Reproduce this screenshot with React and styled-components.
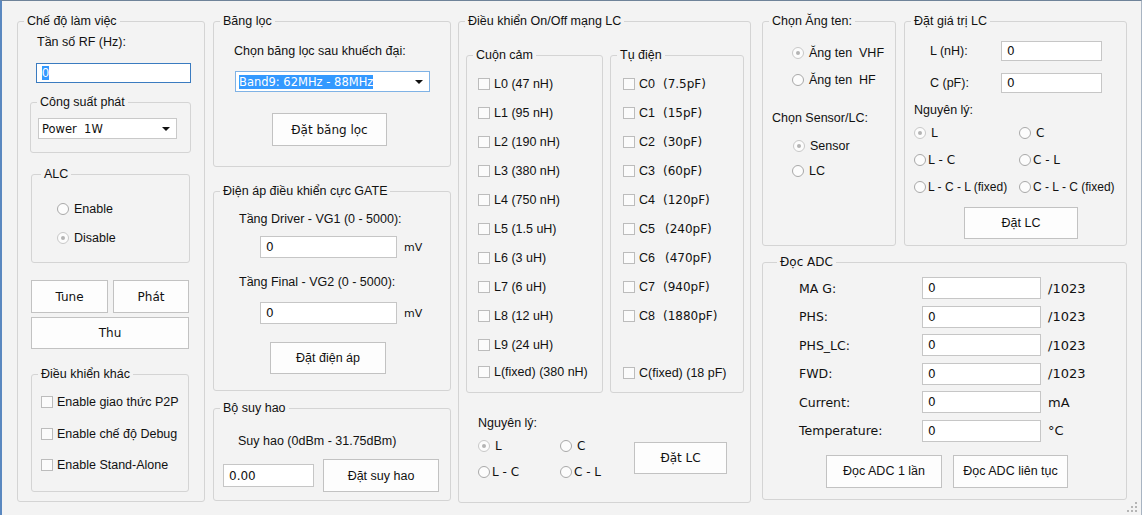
import React from 'react';
import styled, { createGlobalStyle } from 'styled-components';

const SANS = `"Liberation Sans", Arial, sans-serif`;
const ALT = `"DejaVu Sans", Verdana, sans-serif`;

const Global = createGlobalStyle`
  html, body { margin: 0; padding: 0; background: #f3f3f3; }
  body { font-family: ${SANS}; font-size: 12.5px; color: #111; }
  * { box-sizing: border-box; }
`;

const Window = styled.div`
  position: relative;
  width: 1142px;
  height: 515px;
  background: #f3f3f3;
  border-left: 2px solid #5a88c0;
  border-top: 1px solid #6f8399;
  border-right: 1px solid #a8b4c2;
  display: flex;
  align-items: flex-start;
  padding: 13px 0 0 15px;
  overflow: hidden;
`;

const Column = styled.div`
  flex: none;
  width: ${p => p.$w}px;
  margin-left: ${p => p.$ml || 0}px;
  display: flex;
  flex-direction: column;
`;

const Group = styled.fieldset`
  flex: none;
  margin: ${p => `${p.$mt || 0}px 0 0 ${p.$ml || 0}px`};
  padding: 0;
  min-width: 0;
  width: ${p => p.$w}px;
  height: ${p => p.$h}px;
  border: 1px solid #d4d4d4;
  border-radius: 3px;
  display: flex;
  flex-direction: column;
  align-items: flex-start;
`;

const Legend = styled.legend`
  margin-left: ${p => (p.$lx != null ? p.$lx : 6)}px;
  padding: 0 3px;
  font-family: ${p => (p.$alt ? ALT : SANS)};
  font-size: ${p => (p.$alt ? 12 : 12.5)}px;
  line-height: 14px;
  white-space: nowrap;
`;

const Text = styled.span`
  display: block;
  flex: none;
  margin: ${p => `${p.$mt || 0}px 0 0 ${p.$ml || 0}px`};
  width: ${p => (p.$w ? `${p.$w}px` : 'auto')};
  font-family: ${p => (p.$alt ? ALT : SANS)};
  font-size: ${p => p.$fs || 12.5}px;
  line-height: 15px;
  white-space: nowrap;
`;

const Field = styled.div`
  flex: none;
  display: flex;
  align-items: center;
  margin: ${p => `${p.$mt || 0}px 0 0 ${p.$ml || 0}px`};
  width: ${p => p.$w}px;
  height: ${p => p.$h}px;
  padding: 0 5px;
  background: #fff;
  border: 1px solid ${p => (p.$focus ? '#3a7bc0' : '#c6c6c6')};
  font-family: ${p => (p.$alt ? ALT : SANS)};
  font-size: ${p => (p.$alt ? 12 : 12.5)}px;
  white-space: nowrap;
`;

const Selected = styled.span`
  background: #3399ff;
  color: #fff;
  line-height: 14px;
`;

const Combo = styled.div`
  flex: none;
  position: relative;
  display: flex;
  align-items: center;
  margin: ${p => `${p.$mt || 0}px 0 0 ${p.$ml || 0}px`};
  width: ${p => p.$w}px;
  height: ${p => p.$h}px;
  padding: 0 3px;
  background: #fff;
  border: 1px solid ${p => (p.$focus ? '#7fb2e5' : '#c9c9c9')};
  font-family: ${ALT};
  font-size: 11.5px;
  white-space: nowrap;
`;

const ComboArrow = styled.span`
  position: absolute;
  right: 6px;
  top: 50%;
  margin-top: -2px;
  width: 0;
  height: 0;
  border-left: 4px solid transparent;
  border-right: 4px solid transparent;
  border-top: 4px solid #111;
`;

const Button = styled.button`
  flex: none;
  margin: ${p => `${p.$mt || 0}px 0 0 ${p.$ml || 0}px`};
  width: ${p => p.$w}px;
  height: ${p => p.$h}px;
  padding: 0;
  background: #fdfdfd;
  border: 1px solid #c2c2c2;
  border-radius: 0;
  color: #111;
  font-family: ${p => (p.$alt ? ALT : SANS)};
  font-size: ${p => (p.$alt ? 12 : 12.5)}px;
  white-space: nowrap;
`;

const Row = styled.div`
  flex: none;
  display: flex;
  align-items: ${p => p.$align || 'center'};
  gap: ${p => p.$gap || 0}px;
  margin: ${p => `${p.$mt || 0}px 0 0 ${p.$ml || 0}px`};
`;

const Option = styled.div`
  flex: none;
  display: flex;
  align-items: center;
  gap: ${p => (p.$gap != null ? p.$gap : 5)}px;
  height: 15px;
  margin: ${p => `${p.$mt || 0}px 0 0 ${p.$ml || 0}px`};
  font-family: ${p => (p.$alt ? ALT : SANS)};
  font-size: ${p => p.$fs || (p.$alt ? 12 : 12.5)}px;
  white-space: nowrap;
`;

const RadioDot = styled.span`
  flex: none;
  position: relative;
  width: 12px;
  height: 12px;
  border-radius: 50%;
  border: 1px solid ${p => (p.$checked ? '#c8c8c8' : '#a8a8a8')};
  background: #fcfcfc;
  &::after {
    content: '';
    display: ${p => (p.$checked ? 'block' : 'none')};
    position: absolute;
    left: 3px;
    top: 3px;
    width: 4px;
    height: 4px;
    border-radius: 50%;
    background: #b4b4b4;
  }
`;

const CheckBox = styled.span`
  flex: none;
  width: 12px;
  height: 12px;
  border: 1px solid #bcbcbc;
  background: #fbfbfb;
`;

const Value = styled.span`
  margin-left: ${p => p.$ml}px;
  font-family: ${ALT};
  font-size: 12px;
`;

const RadioGrid = styled.div`
  flex: none;
  display: grid;
  grid-template-columns: ${p => p.$cols};
  grid-auto-rows: 15px;
  row-gap: ${p => p.$rowGap}px;
  margin: ${p => `${p.$mt || 0}px 0 0 ${p.$ml || 0}px`};
`;

const AdcGrid = styled.div`
  flex: none;
  display: grid;
  grid-template-columns: 123px 119px auto;
  grid-auto-rows: 22px;
  row-gap: 6.5px;
  align-items: center;
  margin: 8px 0 0 36px;
`;

const Stack = styled.div`
  flex: none;
  display: flex;
  flex-direction: column;
  width: ${p => (p.$w ? `${p.$w}px` : 'auto')};
  margin: ${p => `${p.$mt || 0}px 0 0 ${p.$ml || 0}px`};
`;

const Grip = styled.svg`
  position: absolute;
  right: 4px;
  bottom: 3px;
`;

function Radio({ checked, children, ...rest }) {
  return (
    <Option {...rest}>
      <RadioDot $checked={checked} />
      <span>{children}</span>
    </Option>
  );
}

function Check({ children, ...rest }) {
  return (
    <Option $gap={4} {...rest}>
      <CheckBox />
      <span>{children}</span>
    </Option>
  );
}

const inductors = [
  'L0 (47 nH)', 'L1 (95 nH)', 'L2 (190 nH)', 'L3 (380 nH)', 'L4 (750 nH)',
  'L5 (1.5 uH)', 'L6 (3 uH)', 'L7 (6 uH)', 'L8 (12 uH)', 'L9 (24 uH)',
];

const capacitors = [
  ['C0', '(7.5pF)', 8], ['C1', '(15pF)', 8], ['C2', '(30pF)', 8], ['C3', '(60pF)', 8],
  ['C4', '(120pF)', 8], ['C5', '(240pF)', 10], ['C6', '(470pF)', 10], ['C7', '(940pF)', 8],
  ['C8', '(1880pF)', 8],
];

const adcRows = [
  ['MA G:', '/1023'], ['PHS:', '/1023'], ['PHS_LC:', '/1023'], ['FWD:', '/1023'],
  ['Current:', 'mA'], ['Temperature:', '°C'],
];

export default function App() {
  return (
    <>
      <Global />
      <Window>
        {/* Column 1 */}
        <Column $w={188}>
          <Group $w={188} $h={488}>
            <Legend>Chế độ làm việc</Legend>
            <Text $mt={7} $ml={19}>Tần số RF (Hz):</Text>
            <Field $focus $w={155} $h={20} $mt={13} $ml={18}>
              <Selected>0</Selected>
            </Field>
            <Group $w={161} $h={58} $mt={12} $ml={12}>
              <Legend>Công suất phát</Legend>
              <Combo $w={139} $h={21} $mt={9} $ml={7}>
                Power&nbsp;&nbsp;1W
                <ComboArrow />
              </Combo>
            </Group>
            <Group $w={159} $h={96} $mt={14} $ml={13}>
              <Legend $lx={9}>ALC</Legend>
              <Radio $mt={20} $ml={25}>Enable</Radio>
              <Radio checked $mt={14} $ml={25}>Disable</Radio>
            </Group>
            <Row $mt={17} $ml={13} $gap={5}>
              <Button $alt $w={77} $h={33}>Tune</Button>
              <Button $alt $w={76} $h={33}>Phát</Button>
            </Row>
            <Button $alt $w={158} $h={32} $mt={4} $ml={13}>Thu</Button>
            <Group $w={158} $h={125} $mt={18} $ml={13}>
              <Legend>Điều khiển khác</Legend>
              <Check $mt={13} $ml={9}>Enable giao thức P2P</Check>
              <Check $mt={17} $ml={9}>Enable chế độ Debug</Check>
              <Check $mt={16} $ml={9}>Enable Stand-Alone</Check>
            </Group>
          </Group>
        </Column>

        {/* Column 2 */}
        <Column $w={238} $ml={8}>
          <Group $w={238} $h={153}>
            <Legend>Băng lọc</Legend>
            <Text $mt={16} $ml={20}>Chọn băng lọc sau khuếch đại:</Text>
            <Combo $focus $w={195} $h={21} $mt={12} $ml={21}>
              <Selected>Band9: 62MHz - 88MHz</Selected>
              <ComboArrow />
            </Combo>
            <Button $alt $w={115} $h={33} $mt={21} $ml={58}>Đặt băng lọc</Button>
          </Group>
          <Group $w={238} $h={207} $mt={17}>
            <Legend>Điện áp điều khiển cực GATE</Legend>
            <Text $mt={14} $ml={25}>Tầng Driver - VG1 (0 - 5000):</Text>
            <Row $mt={9} $ml={46} $gap={7}>
              <Field $alt $w={137} $h={22}>0</Field>
              <Text $alt $fs={11}>mV</Text>
            </Row>
            <Text $mt={17} $ml={25}>Tầng Final - VG2 (0 - 5000):</Text>
            <Row $mt={12} $ml={46} $gap={7}>
              <Field $alt $w={137} $h={22}>0</Field>
              <Text $alt $fs={11}>mV</Text>
            </Row>
            <Button $w={116} $h={32} $mt={18} $ml={56}>Đặt điện áp</Button>
          </Group>
          <Group $w={238} $h={100} $mt={10}>
            <Legend>Bộ suy hao</Legend>
            <Text $mt={19} $ml={24}>Suy hao (0dBm - 31.75dBm)</Text>
            <Row $mt={10} $ml={9} $gap={9}>
              <Field $alt $w={91} $h={23}>0.00</Field>
              <Button $w={116} $h={33}>Đặt suy hao</Button>
            </Row>
          </Group>
        </Column>

        {/* Column 3 */}
        <Column $w={293} $ml={7}>
          <Group $w={293} $h={489}>
            <Legend>Điều khiển On/Off mạng LC</Legend>
            <Row $align="flex-start" $mt={20} $ml={7} $gap={7}>
              <Group $w={137} $h={345}>
                <Legend>Cuộn cảm</Legend>
                {inductors.map((t, i) => (
                  <Check key={t} $mt={i === 0 ? 14 : 14} $ml={11}>{t}</Check>
                ))}
                <Check $mt={12} $ml={11}>L(fixed) (380 nH)</Check>
              </Group>
              <Group $w={134} $h={345}>
                <Legend>Tụ điện</Legend>
                {capacitors.map(([c, v, ml]) => (
                  <Check key={c} $mt={14} $ml={12}>
                    {c}
                    <Value $ml={ml}>{v}</Value>
                  </Check>
                ))}
                <Check $mt={42} $ml={12}>C(fixed) (18 pF)</Check>
              </Group>
            </Row>
            <Row $align="flex-start" $mt={23} $ml={19}>
              <Stack $w={156}>
                <Text>Nguyên lý:</Text>
                <RadioGrid $cols="82px auto" $rowGap={11} $mt={7}>
                  <Radio checked $alt>L</Radio>
                  <Radio $alt>C</Radio>
                  <Radio $alt $gap={2}>L - C</Radio>
                  <Radio $alt $gap={2}>C - L</Radio>
                </RadioGrid>
              </Stack>
              <Button $alt $w={93} $h={32} $mt={26}>Đặt LC</Button>
            </Row>
          </Group>
        </Column>

        {/* Column 4 */}
        <Column $w={365} $ml={11}>
          <Row $align="flex-start" $gap={8}>
            <Group $w={134} $h={232}>
              <Legend>Chọn Ăng ten:</Legend>
              <Radio checked $mt={17} $ml={29}>Ăng ten&nbsp;&nbsp;VHF</Radio>
              <Radio $mt={12} $ml={29}>Ăng ten&nbsp;&nbsp;HF</Radio>
              <Text $mt={24} $ml={9}>Chọn Sensor/LC:</Text>
              <Radio checked $mt={12} $ml={30}>Sensor</Radio>
              <Radio $mt={10} $ml={29}>LC</Radio>
            </Group>
            <Group $w={223} $h={232}>
              <Legend>Đặt giá trị LC</Legend>
              <Row $mt={13} $ml={25}>
                <Text $w={71}>L (nH):</Text>
                <Field $alt $w={101} $h={20}>0</Field>
              </Row>
              <Row $mt={12} $ml={25}>
                <Text $w={71}>C (pF):</Text>
                <Field $alt $w={101} $h={20}>0</Field>
              </Row>
              <Text $mt={10} $ml={9}>Nguyên lý:</Text>
              <RadioGrid $cols="105px auto" $rowGap={12} $mt={7} $ml={9}>
                <Radio checked $alt>L</Radio>
                <Radio $alt>C</Radio>
                <Radio $alt $gap={2}>L - C</Radio>
                <Radio $alt $gap={2}>C - L</Radio>
                <Radio $gap={2} $fs={12}>L - C - L (fixed)</Radio>
                <Radio $gap={2} $fs={12}>C - L - C (fixed)</Radio>
              </RadioGrid>
              <Button $w={114} $h={32} $mt={13} $ml={59}>Đặt LC</Button>
            </Group>
          </Row>
          <Group $w={365} $h={245} $mt={9}>
            <Legend $alt $lx={14}>Đọc ADC</Legend>
            <AdcGrid>
              {adcRows.map(([label, unit]) => (
                <React.Fragment key={label}>
                  <Text $alt $fs={12.5}>{label}</Text>
                  <Field $alt $w={119} $h={22}>0</Field>
                  <Text $alt $fs={13} $ml={7}>{unit}</Text>
                </React.Fragment>
              ))}
            </AdcGrid>
            <Row $mt={13} $ml={63} $gap={11}>
              <Button $w={116} $h={33}>Đọc ADC 1 lần</Button>
              <Button $w={115} $h={33}>Đọc ADC liên tục</Button>
            </Row>
          </Group>
        </Column>

        <Grip width="10" height="10" viewBox="0 0 10 10">
          <g fill="#b5b5b5">
            <rect x="8" y="0" width="2" height="2" />
            <rect x="4" y="4" width="2" height="2" />
            <rect x="8" y="4" width="2" height="2" />
            <rect x="0" y="8" width="2" height="2" />
            <rect x="4" y="8" width="2" height="2" />
            <rect x="8" y="8" width="2" height="2" />
          </g>
        </Grip>
      </Window>
    </>
  );
}
